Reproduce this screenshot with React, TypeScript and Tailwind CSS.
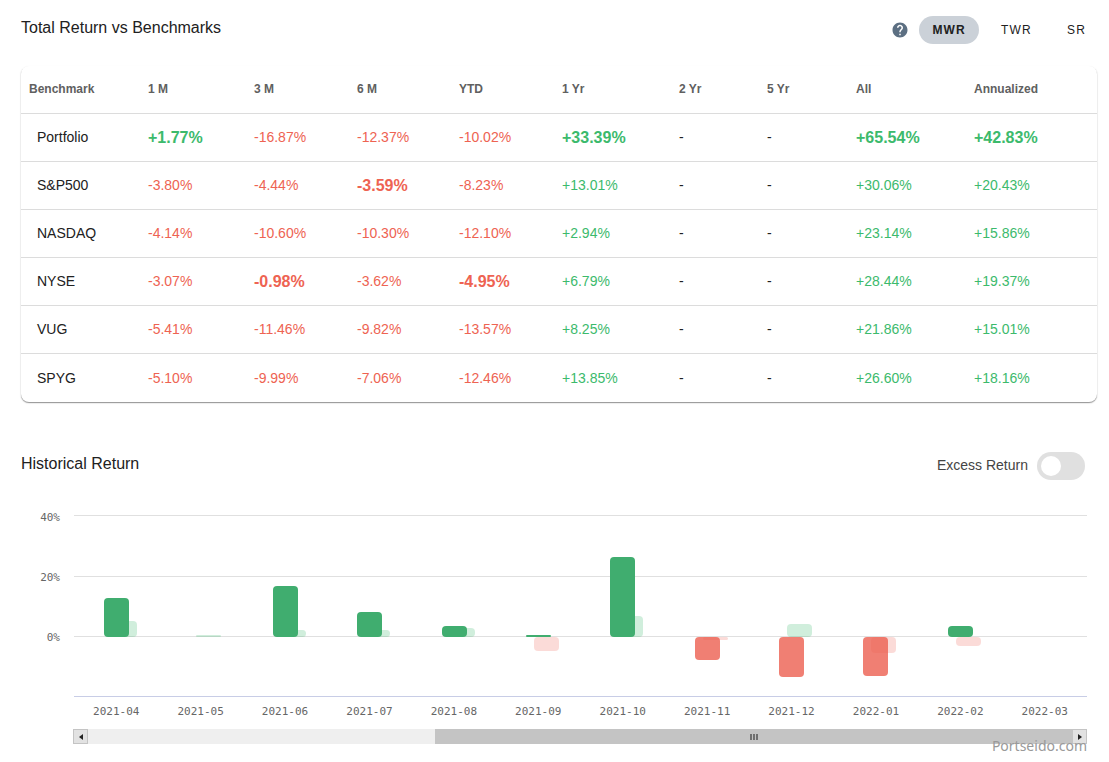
import { useState } from "react";
import { MdHelp } from "react-icons/md";

const periods = ["1 M", "3 M", "6 M", "YTD", "1 Yr", "2 Yr", "5 Yr", "All", "Annualized"];

const rows = [
  { name: "Portfolio", values: ["+1.77%", "-16.87%", "-12.37%", "-10.02%", "+33.39%", "-", "-", "+65.54%", "+42.83%"], best: [0, 4, 7, 8] },
  { name: "S&P500", values: ["-3.80%", "-4.44%", "-3.59%", "-8.23%", "+13.01%", "-", "-", "+30.06%", "+20.43%"], best: [2] },
  { name: "NASDAQ", values: ["-4.14%", "-10.60%", "-10.30%", "-12.10%", "+2.94%", "-", "-", "+23.14%", "+15.86%"], best: [] },
  { name: "NYSE", values: ["-3.07%", "-0.98%", "-3.62%", "-4.95%", "+6.79%", "-", "-", "+28.44%", "+19.37%"], best: [1, 3] },
  { name: "VUG", values: ["-5.41%", "-11.46%", "-9.82%", "-13.57%", "+8.25%", "-", "-", "+21.86%", "+15.01%"], best: [] },
  { name: "SPYG", values: ["-5.10%", "-9.99%", "-7.06%", "-12.46%", "+13.85%", "-", "-", "+26.60%", "+18.16%"], best: [] },
] as { name: string; values: string[]; best: number[] }[];

const columnWidths = [
  "w-[119px]", "w-[106px]", "w-[103px]", "w-[102px]", "w-[103px]",
  "w-[117px]", "w-[88px]", "w-[89px]", "w-[118px]", "w-[131px]",
];

function valueClass(value: string, best: boolean) {
  const size = best ? "pt-0.5 text-base font-bold" : "text-sm";
  if (value === "-") return `${size} text-[#212121]`;
  return value.startsWith("+") ? `${size} text-[#3cba6c]` : `${size} text-[#ee6352]`;
}

function BenchmarkTable() {
  return (
    <div className="overflow-hidden rounded-lg bg-white shadow-[0_1px_1px_rgba(0,0,0,0.35),0_1px_2px_rgba(0,0,0,0.13)]">
      <table className="w-full table-fixed border-collapse text-left">
        <colgroup>
          {columnWidths.map((w, i) => (
            <col key={i} className={w} />
          ))}
        </colgroup>
        <thead>
          <tr className="h-[47px] border-b border-[#dcdcdc] text-xs text-[#606060]">
            <th scope="col" className="px-2 font-bold">Benchmark</th>
            {periods.map((p) => (
              <th key={p} scope="col" className="px-2 font-bold">{p}</th>
            ))}
          </tr>
        </thead>
        <tbody>
          {rows.map((row) => (
            <tr key={row.name} className="h-12 border-b border-[#dcdcdc] last:h-[49px] last:border-b-0">
              <th scope="row" className="pl-4 text-sm font-normal text-[#212121]">{row.name}</th>
              {row.values.map((v, i) => (
                <td key={i} className={`px-2 ${valueClass(v, row.best.includes(i))}`}>{v}</td>
              ))}
            </tr>
          ))}
        </tbody>
      </table>
    </div>
  );
}

// Bar heights are in chart units: three units to one percent.
const months = [
  { label: "2021-04", own: 39, bench: 16 },
  { label: "2021-05", own: 0, bench: 2 },
  { label: "2021-06", own: 51, bench: 7 },
  { label: "2021-07", own: 25, bench: 7 },
  { label: "2021-08", own: 11, bench: 9 },
  { label: "2021-09", own: 2, bench: -14 },
  { label: "2021-10", own: 80, bench: 21 },
  { label: "2021-11", own: -23, bench: -3 },
  { label: "2021-12", own: -40, bench: 13 },
  { label: "2022-01", own: -39, bench: -16 },
  { label: "2022-02", own: 11, bench: -9 },
  { label: "2022-03", own: 0, bench: 0 },
];

const ZERO = 137;
const LEFT = 53;
const STEP = 1013 / 12;

function Bar({ x, value, fill, opacity }: { x: number; value: number; fill: string; opacity: number }) {
  const h = Math.abs(value);
  if (!h) return null;
  return (
    <rect
      x={x}
      y={value > 0 ? ZERO - h : ZERO}
      width={25}
      height={h}
      rx={Math.min(4, h / 2)}
      fill={fill}
      fillOpacity={opacity}
    />
  );
}

function ReturnChart() {
  return (
    <svg viewBox="0 0 1066 222" className="block w-full font-['DejaVu_Sans_Mono',monospace]" role="img" aria-label="Historical Return">
      <g stroke="#e0e0e0">
        <path d="M53 15.5H1066M53 76.5H1066M53 136.5H1066" />
        <path d="M53 196.5H1066" stroke="#c8cde6" />
      </g>
      <g fill="#666666" fontSize={11}>
        <text x={39} y={21} textAnchor="end">40%</text>
        <text x={39} y={81} textAnchor="end">20%</text>
        <text x={39} y={141} textAnchor="end">0%</text>
        {months.map((m, i) => (
          <text key={m.label} x={LEFT + STEP * (i + 0.5)} y={215} textAnchor="middle">{m.label}</text>
        ))}
      </g>
      {months.map((m, i) => {
        const x = Math.round(LEFT + 30 + (STEP - 0.04) * i);
        return (
          <g key={m.label}>
            <Bar x={x + 8} value={m.bench} fill={m.bench > 0 ? "#3cb86c" : "#ea4a3e"} opacity={m.bench > 0 ? 0.24 : 0.2} />
            <Bar x={x} value={m.own} fill={m.own > 0 ? "#40ad6f" : "#ec5f50"} opacity={m.own > 0 ? 1 : 0.8} />
          </g>
        );
      })}
    </svg>
  );
}

function ChartScrollbar() {
  return (
    <div className="relative ml-[52px] flex h-[15px] bg-[#efefef]">
      <button type="button" aria-label="Scroll left" className="flex w-[15px] items-center justify-center border border-[#c4c4c4] bg-[#e2e2e2]">
        <svg viewBox="0 0 4 6" className="h-1.5 w-1"><path d="M4 0v6L0 3z" fill="#222" /></svg>
      </button>
      <div className="grow-[347] basis-0" />
      <div className="flex grow-[637] basis-0 items-center justify-center gap-px bg-[#c4c4c4]">
        <span className="h-1.5 w-0.5 bg-[#707070]" />
        <span className="h-1.5 w-0.5 bg-[#707070]" />
        <span className="h-1.5 w-0.5 bg-[#707070]" />
      </div>
      <button type="button" aria-label="Scroll right" className="flex w-[15px] items-center justify-center border border-[#c4c4c4] bg-[#e2e2e2]">
        <svg viewBox="0 0 4 6" className="h-1.5 w-1"><path d="M0 0v6L4 3z" fill="#222" /></svg>
      </button>
      <span className="absolute top-[7px] right-0 font-['Noto_Sans',sans-serif] text-sm leading-5 text-[#999999]">Portseido.com</span>
    </div>
  );
}

const measures = ["MWR", "TWR", "SR"];

export default function App() {
  const [measure, setMeasure] = useState("MWR");
  const [excess, setExcess] = useState(false);
  return (
    <main className="min-h-screen bg-white pt-4 pr-3 pb-4 pl-[21px] font-['Liberation_Sans',Arial,sans-serif] text-[#212121]">
      <section>
        <header className="-mr-0.5 flex h-7 items-center justify-between">
          <h2 className="pb-1 text-base">Total Return vs Benchmarks</h2>
          <div className="flex items-center">
            <button type="button" aria-label="About return measures" className="mr-2.5 text-[#5c6f82]">
              <MdHelp className="size-[18px]" />
            </button>
            <div className="flex gap-[9px]">
              {measures.map((m) => (
                <button
                  key={m}
                  type="button"
                  aria-pressed={m === measure}
                  onClick={() => setMeasure(m)}
                  className={`h-7 rounded-full px-[13px] text-xs tracking-widest ${m === measure ? "bg-[#cbd1d8] font-bold" : ""}`}
                >
                  {m}
                </button>
              ))}
            </div>
          </div>
        </header>
        <div className="mt-[22px]">
          <BenchmarkTable />
        </div>
      </section>

      <section className="mt-[50px] pr-[10px]">
        <header className="flex h-7 items-center justify-between pr-0.5">
          <h2 className="pb-1 text-base">Historical Return</h2>
          <label className="flex items-center gap-[9px] text-sm text-[#444444]">
            <span className="pb-0.5">Excess Return</span>
            <span className="flex">
              <input
                type="checkbox"
                role="switch"
                checked={excess}
                onChange={(e) => setExcess(e.target.checked)}
                className="peer sr-only"
              />
              <span className="flex h-7 w-12 items-center rounded-full bg-[#e0e0e0] px-1 peer-checked:justify-end peer-checked:bg-[#40ad6f]">
                <span className="size-5 rounded-full bg-white" />
              </span>
            </span>
          </label>
        </header>
        <div className="mt-5">
          <ReturnChart />
          <div className="mt-[7px]">
            <ChartScrollbar />
          </div>
        </div>
      </section>
    </main>
  );
}
